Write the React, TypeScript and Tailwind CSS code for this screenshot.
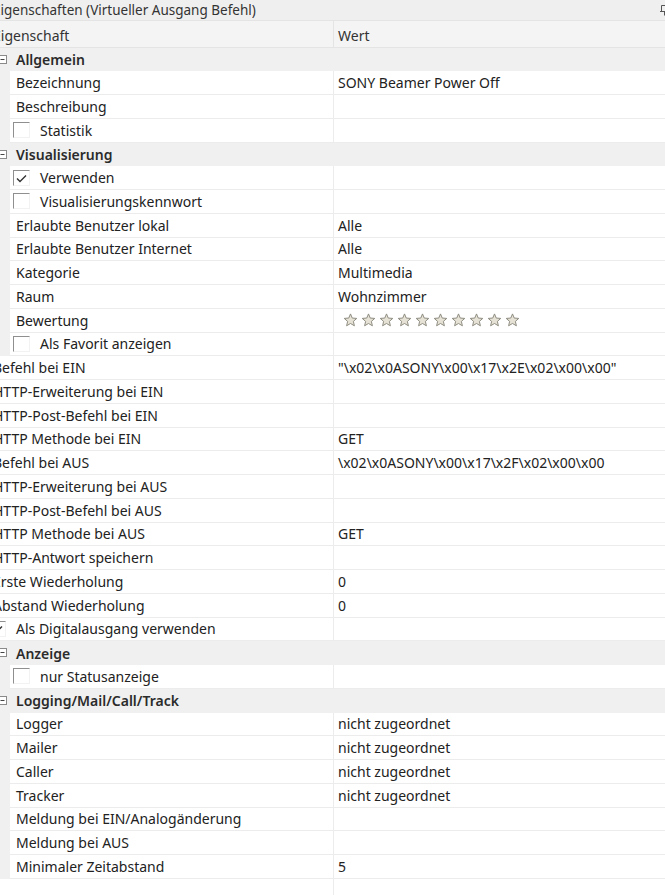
import React from "react";

type Row =
  | { kind: "cat"; label: string }
  | { kind: "item"; label: string; value?: string; level: 0 | 1 }
  | { kind: "check"; label: string; checked: boolean; level: 0 | 1 }
  | { kind: "stars"; label: string };

const rows: Row[] = [
  { kind: "cat", label: "Allgemein" },
  { kind: "item", label: "Bezeichnung", value: "SONY Beamer Power Off", level: 1 },
  { kind: "item", label: "Beschreibung", level: 1 },
  { kind: "check", label: "Statistik", checked: false, level: 1 },
  { kind: "cat", label: "Visualisierung" },
  { kind: "check", label: "Verwenden", checked: true, level: 1 },
  { kind: "check", label: "Visualisierungskennwort", checked: false, level: 1 },
  { kind: "item", label: "Erlaubte Benutzer lokal", value: "Alle", level: 1 },
  { kind: "item", label: "Erlaubte Benutzer Internet", value: "Alle", level: 1 },
  { kind: "item", label: "Kategorie", value: "Multimedia", level: 1 },
  { kind: "item", label: "Raum", value: "Wohnzimmer", level: 1 },
  { kind: "stars", label: "Bewertung" },
  { kind: "check", label: "Als Favorit anzeigen", checked: false, level: 1 },
  { kind: "item", label: "Befehl bei EIN", value: '"\\x02\\x0ASONY\\x00\\x17\\x2E\\x02\\x00\\x00"', level: 0 },
  { kind: "item", label: "HTTP-Erweiterung bei EIN", level: 0 },
  { kind: "item", label: "HTTP-Post-Befehl bei EIN", level: 0 },
  { kind: "item", label: "HTTP Methode bei EIN", value: "GET", level: 0 },
  { kind: "item", label: "Befehl bei AUS", value: "\\x02\\x0ASONY\\x00\\x17\\x2F\\x02\\x00\\x00", level: 0 },
  { kind: "item", label: "HTTP-Erweiterung bei AUS", level: 0 },
  { kind: "item", label: "HTTP-Post-Befehl bei AUS", level: 0 },
  { kind: "item", label: "HTTP Methode bei AUS", value: "GET", level: 0 },
  { kind: "item", label: "HTTP-Antwort speichern", level: 0 },
  { kind: "item", label: "Erste Wiederholung", value: "0", level: 0 },
  { kind: "item", label: "Abstand Wiederholung", value: "0", level: 0 },
  { kind: "check", label: "Als Digitalausgang verwenden", checked: true, level: 0 },
  { kind: "cat", label: "Anzeige" },
  { kind: "check", label: "nur Statusanzeige", checked: false, level: 1 },
  { kind: "cat", label: "Logging/Mail/Call/Track" },
  { kind: "item", label: "Logger", value: "nicht zugeordnet", level: 1 },
  { kind: "item", label: "Mailer", value: "nicht zugeordnet", level: 1 },
  { kind: "item", label: "Caller", value: "nicht zugeordnet", level: 1 },
  { kind: "item", label: "Tracker", value: "nicht zugeordnet", level: 1 },
  { kind: "item", label: "Meldung bei EIN/Analogänderung", level: 1 },
  { kind: "item", label: "Meldung bei AUS", level: 1 },
  { kind: "item", label: "Minimaler Zeitabstand", value: "5", level: 1 },
];

function Checkbox({ checked }: { checked: boolean }) {
  return (
    <span className="relative inline-block w-[17px] h-[16px] shrink-0 border border-t-[#8f8f8f] border-l-[#8f8f8f] border-r-[#f2f2f2] border-b-[#f2f2f2]">
      {checked && (
        <svg className="absolute left-[2px] top-[3px]" width="11" height="9" viewBox="0 0 11 9">
          <path d="M1 4.5 L4 7.5 L10 1.5" fill="none" stroke="#333" strokeWidth="1.4" />
        </svg>
      )}
    </span>
  );
}

function Star() {
  return (
    <svg width="15" height="14" viewBox="0 0 24 23">
      <path
        d="M12 1.5 L14.9 8.3 L22.3 8.9 L16.7 13.8 L18.4 21 L12 17.2 L5.6 21 L7.3 13.8 L1.7 8.9 L9.1 8.3 Z"
        fill="#e6e3d6"
        stroke="#8c8a7e"
        strokeWidth="1.6"
        strokeLinejoin="round"
      />
    </svg>
  );
}

function Collapse() {
  return (
    <svg className="absolute left-[-2px] top-[7px]" width="10" height="10" viewBox="0 0 10 10">
      <rect x="0.5" y="0.5" width="8" height="8" fill="#fff" stroke="#8a8a8a" />
      <path d="M2.5 4.5 H6.5" stroke="#444" />
    </svg>
  );
}

function GridRow({ row }: { row: Row }) {
  if (row.kind === "cat") {
    return (
      <div className="relative flex h-[23.75px] items-center bg-[#f0f0f0]">
        <Collapse />
        <span className="pl-[16px] font-semibold text-[#2b2b2b]">{row.label}</span>
      </div>
    );
  }

  const nested = row.kind === "stars" || row.level === 1;
  let label: React.ReactNode;
  if (row.kind === "check") {
    label = (
      <div className={`flex items-center ${nested ? "pl-[3px]" : "-ml-[11px]"}`}>
        <Checkbox checked={row.checked} />
        <span className="pl-[10px]">{row.label}</span>
      </div>
    );
  } else {
    label = <span className={nested ? "pl-[6px]" : "-ml-[7px]"}>{row.label}</span>;
  }

  let value: React.ReactNode = null;
  if (row.kind === "stars") {
    value = (
      <div className="flex items-center gap-[3px] pl-[9px]">
        {Array.from({ length: 10 }).map((_, i) => (
          <Star key={i} />
        ))}
      </div>
    );
  } else if (row.kind === "item" && row.value) {
    value = <span className="pl-[4px]">{row.value}</span>;
  }

  return (
    <div className="flex h-[23.75px]">
      <div className="flex w-[333px] shrink-0 bg-[#f0f0f0]">
        {nested && <div className="w-[10px] shrink-0" />}
        <div className="flex flex-1 items-center bg-white border-b border-[#ececec] overflow-hidden whitespace-nowrap">
          {label}
        </div>
      </div>
      <div className="flex flex-1 items-center bg-white border-l border-b border-[#ececec] whitespace-nowrap overflow-hidden">
        {value}
      </div>
    </div>
  );
}

export default function App() {
  return (
    <div
      className="w-[665px] h-[895px] overflow-hidden bg-white text-[14px] text-[#222] flex flex-col"
      style={{ fontFamily: '"Noto Sans", "Open Sans", sans-serif' }}
    >
      {/* Title bar */}
      <div className="relative flex h-[21px] shrink-0 items-center bg-[#efefef] border-b border-[#e4e4e4]">
        <span className="-ml-[7px] text-[#333] text-[13.5px]">Eigenschaften (Virtueller Ausgang Befehl)</span>
        <svg className="absolute right-[-4px] top-[4px]" width="9" height="12" viewBox="0 0 9 12">
          <path d="M1.5 1.5 H7.5 V7.5 H1.5 Z M0 7.5 H9 M4.5 7.5 V11.5" fill="none" stroke="#555" />
        </svg>
      </div>

      {/* Column header */}
      <div className="flex h-[26.5px] shrink-0 bg-[#f4f4f4] border-b border-[#e4e4e4]">
        <div className="flex w-[333px] shrink-0 items-center pt-[3px]">
          <span className="-ml-[7px] text-[#333]">Eigenschaft</span>
        </div>
        <div className="flex flex-1 items-center border-l border-[#e4e4e4] pt-[3px]">
          <span className="pl-[4px] text-[#333]">Wert</span>
        </div>
      </div>

      {/* Property rows */}
      <div className="flex flex-col">
        {rows.map((r, i) => (
          <GridRow key={i} row={r} />
        ))}
      </div>

      {/* Empty rest */}
      <div className="flex flex-1">
        <div className="w-[333px] shrink-0" />
        <div className="flex-1 border-l border-[#ececec]" />
      </div>
    </div>
  );
}
